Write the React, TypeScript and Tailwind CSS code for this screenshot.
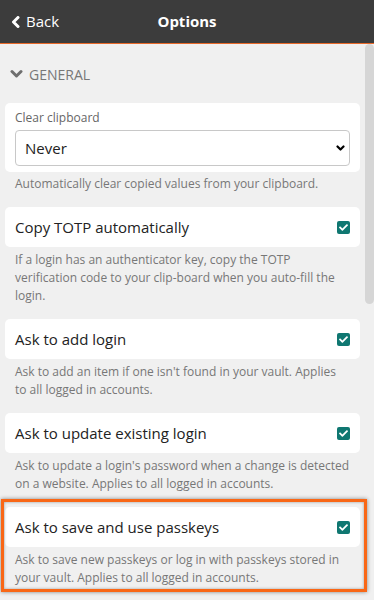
import React from "react";
import { FaCheck } from "react-icons/fa";

function Check() {
  return (
    <span className="flex h-[13px] w-[13px] items-center justify-center rounded-[2px] bg-[#0f7771]">
      <FaCheck className="h-[9px] w-[9px] text-white" />
    </span>
  );
}

function ToggleRow({ label, help }: { label: string; help: string }) {
  return (
    <div>
      <div className="flex h-[40px] items-center justify-between rounded-[5px] bg-white pl-[10px] pr-[10px]">
        <span className="text-[15px] text-[#222]">{label}</span>
        <Check />
      </div>
      <p className="mt-[4px] px-[10px] text-[12px] leading-[18px] text-[#777]">{help}</p>
    </div>
  );
}

export default function App() {
  return (
    <div className="relative h-[600px] w-[374px] overflow-hidden bg-[#f0f0f0]" style={{ fontFamily: '"Open Sans", sans-serif' }}>
      <header className="grid h-[44px] grid-cols-[1fr_auto_1fr] items-center border-b border-[#e8692a] bg-[#3c3c3c] text-white">
        <div className="flex items-center gap-[6px] pl-[11px]">
          <svg width="9" height="12" viewBox="0 0 9 12" fill="none">
            <polyline points="7,1.5 2.5,6 7,10.5" stroke="white" strokeWidth="3" strokeLinejoin="round" strokeLinecap="round" />
          </svg>
          <span className="text-[15px]">Back</span>
        </div>
        <h1 className="text-[15px] font-bold">Options</h1>
        <div />
      </header>
      <div className="flex h-[556px]">
        <main className="flex-1 overflow-hidden px-[5px] pt-[20px]">
          <div className="flex h-[20px] items-center gap-[6px] pl-[5px] text-[14px] text-[#777]">
            <svg width="13" height="10" viewBox="0 0 13 10" fill="none">
              <polyline points="2,2.5 6.5,7 11,2.5" stroke="#6e6e6e" strokeWidth="3" strokeLinejoin="round" strokeLinecap="round" />
            </svg>
            <span>GENERAL</span>
          </div>
          <div className="mt-[19px] flex flex-col gap-[14px]">
            <div>
              <div className="rounded-[5px] bg-white px-[10px] pb-[6px] pt-[6px]">
                <div className="text-[12px] leading-[18px] text-[#666]">Clear clipboard</div>
                <div className="mt-[3px] flex h-[36px] items-center justify-between rounded-[4px] border border-[#c8c8c8] bg-white pl-[9px] pr-[4px]">
                  <span className="text-[15px] text-[#222]">Never</span>
                  <svg width="9" height="7" viewBox="0 0 9 7" fill="none">
                    <polyline points="1.5,1.5 4.5,4.5 7.5,1.5" stroke="black" strokeWidth="2.2" strokeLinejoin="round" strokeLinecap="round" />
                  </svg>
                </div>
              </div>
              <p className="mt-[3px] px-[10px] text-[12px] leading-[18px] text-[#777]">
                Automatically clear copied values from your clipboard.
              </p>
            </div>
            <ToggleRow
              label="Copy TOTP automatically"
              help="If a login has an authenticator key, copy the TOTP verification code to your clip-board when you auto-fill the login."
            />
            <ToggleRow
              label="Ask to add login"
              help="Ask to add an item if one isn't found in your vault. Applies to all logged in accounts."
            />
            <ToggleRow
              label="Ask to update existing login"
              help="Ask to update a login's password when a change is detected on a website. Applies to all logged in accounts."
            />
            <ToggleRow
              label="Ask to save and use passkeys"
              help="Ask to save new passkeys or log in with passkeys stored in your vault. Applies to all logged in accounts."
            />
          </div>
        </main>
        <div className="w-[9px] bg-[#f0f0f0]">
          <div className="h-[260px] rounded-[5px] bg-[#d6d6d6]" />
        </div>
      </div>
      <div className="pointer-events-none absolute left-[1px] top-[499px] h-[93px] w-[366px] border-[3px] border-[#f96716] shadow-[0_0_4px_rgba(0,0,0,0.45),inset_0_0_3px_rgba(0,0,0,0.35)]" />
    </div>
  );
}
